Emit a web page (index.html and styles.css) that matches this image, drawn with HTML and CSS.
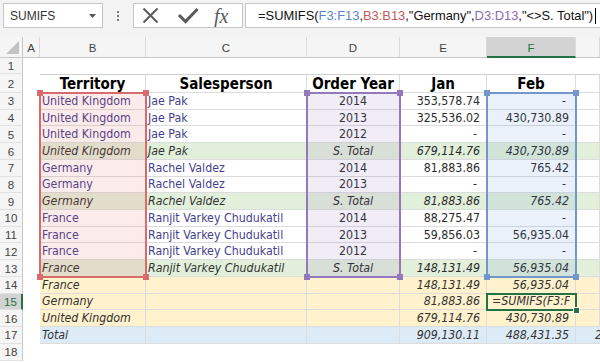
FILE: index.html
```html
<!DOCTYPE html>
<html>
<head>
<meta charset="utf-8">
<link rel="stylesheet" href="styles.css">
</head>
<body>
<div class="app">
  <div class="fbar">
    <div class="namebox"><span>SUMIFS</span><svg class="dd" width="7" height="4" viewBox="0 0 7 4"><path d="M0 0H7L3.5 4Z" fill="#555"/></svg></div>
    <div class="grip"><i></i><i></i><i></i></div>
    <div class="btns">
      <svg width="108" height="23" viewBox="0 0 108 23">
        <path d="M9.5 4.5L23.5 18.5M23.5 4.5L9.5 18.5" stroke="#5a5a5a" stroke-width="2" fill="none"/>
        <path d="M45 11L51.5 17.5L63.5 5" stroke="#5a5a5a" stroke-width="3" fill="none"/>
        <text x="80" y="19" class="fx">fx</text>
      </svg>
    </div>
    <div class="formula">=SUMIFS(<span class="f-f">F3:F13</span>,<span class="f-b">B3:B13</span>,"Germany",<span class="f-d">D3:D13</span>,"&lt;&gt;S. Total")<span class="caret"></span></div>
  </div>
  <div class="sheetwrap">
    <div class="sheet">
      <div class="row">
        <div class="corner"><svg width="13" height="13" viewBox="0 0 13 13"><path d="M0 13H13V0Z" fill="#c3c3c3"/></svg></div>
        <div class="ch">A</div><div class="ch">B</div><div class="ch">C</div><div class="ch">D</div><div class="ch">E</div><div class="ch sel">F</div><div class="ch"></div>
      </div>
      <div class="row">
        <div class="rh">1</div><div class="c"></div><div class="c"></div><div class="c"></div><div class="c"></div><div class="c"></div><div class="c"></div><div class="c"></div>
      </div>
      <div class="row h2">
        <div class="rh">2</div><div class="c"></div>
        <div class="c t">Territory</div><div class="c t">Salesperson</div><div class="c t">Order Year</div><div class="c t">Jan</div><div class="c t">Feb</div><div class="c t"></div>
      </div>
      <div class="row">
        <div class="rh">3</div><div class="c"></div>
        <div class="c t tx">United Kingdom</div><div class="c t tx">Jae Pak</div><div class="c t ctr">2014</div><div class="c t num">353,578.74</div><div class="c t num dash">-</div><div class="c t"></div>
      </div>
      <div class="row">
        <div class="rh">4</div><div class="c"></div>
        <div class="c t tx">United Kingdom</div><div class="c t tx">Jae Pak</div><div class="c t ctr">2013</div><div class="c t num">325,536.02</div><div class="c t num">430,730.89</div><div class="c t"></div>
      </div>
      <div class="row">
        <div class="rh">5</div><div class="c"></div>
        <div class="c t tx">United Kingdom</div><div class="c t tx">Jae Pak</div><div class="c t ctr">2012</div><div class="c t num dash">-</div><div class="c t num dash">-</div><div class="c t"></div>
      </div>
      <div class="row sub">
        <div class="rh">6</div><div class="c"></div>
        <div class="c t tx">United Kingdom</div><div class="c t tx">Jae Pak</div><div class="c t ctr">S. Total</div><div class="c t num">679,114.76</div><div class="c t num">430,730.89</div><div class="c t"></div>
      </div>
      <div class="row">
        <div class="rh">7</div><div class="c"></div>
        <div class="c t tx">Germany</div><div class="c t tx">Rachel Valdez</div><div class="c t ctr">2014</div><div class="c t num">81,883.86</div><div class="c t num">765.42</div><div class="c t"></div>
      </div>
      <div class="row">
        <div class="rh">8</div><div class="c"></div>
        <div class="c t tx">Germany</div><div class="c t tx">Rachel Valdez</div><div class="c t ctr">2013</div><div class="c t num dash">-</div><div class="c t num dash">-</div><div class="c t"></div>
      </div>
      <div class="row sub">
        <div class="rh">9</div><div class="c"></div>
        <div class="c t tx">Germany</div><div class="c t tx">Rachel Valdez</div><div class="c t ctr">S. Total</div><div class="c t num">81,883.86</div><div class="c t num">765.42</div><div class="c t"></div>
      </div>
      <div class="row">
        <div class="rh">10</div><div class="c"></div>
        <div class="c t tx">France</div><div class="c t tx">Ranjit Varkey Chudukatil</div><div class="c t ctr">2014</div><div class="c t num">88,275.47</div><div class="c t num dash">-</div><div class="c t"></div>
      </div>
      <div class="row">
        <div class="rh">11</div><div class="c"></div>
        <div class="c t tx">France</div><div class="c t tx">Ranjit Varkey Chudukatil</div><div class="c t ctr">2013</div><div class="c t num">59,856.03</div><div class="c t num">56,935.04</div><div class="c t"></div>
      </div>
      <div class="row">
        <div class="rh">12</div><div class="c"></div>
        <div class="c t tx">France</div><div class="c t tx">Ranjit Varkey Chudukatil</div><div class="c t ctr">2012</div><div class="c t num dash">-</div><div class="c t num dash">-</div><div class="c t"></div>
      </div>
      <div class="row sub">
        <div class="rh">13</div><div class="c"></div>
        <div class="c t tx">France</div><div class="c t tx">Ranjit Varkey Chudukatil</div><div class="c t ctr">S. Total</div><div class="c t num">148,131.49</div><div class="c t num">56,935.04</div><div class="c t"></div>
      </div>
      <div class="row sum">
        <div class="rh">14</div><div class="c"></div>
        <div class="c t">France</div><div class="c t"></div><div class="c t"></div><div class="c t num">148,131.49</div><div class="c t num">56,935.04</div><div class="c t"></div>
      </div>
      <div class="row sum">
        <div class="rh hl">15</div><div class="c"></div>
        <div class="c t">Germany</div><div class="c t"></div><div class="c t"></div><div class="c t num">81,883.86</div><div class="c t edit"><span class="clip">=SUMIFS(F3:F</span></div><div class="c t"></div>
      </div>
      <div class="row sum">
        <div class="rh">16</div><div class="c"></div>
        <div class="c t">United Kingdom</div><div class="c t"></div><div class="c t"></div><div class="c t num">679,114.76</div><div class="c t num">430,730.89</div><div class="c t"></div>
      </div>
      <div class="row tot">
        <div class="rh">17</div><div class="c"></div>
        <div class="c t">Total</div><div class="c t"></div><div class="c t"></div><div class="c t num">909,130.11</div><div class="c t num">488,431.35</div><div class="c t num">209,413.28</div>
      </div>
      <div class="row">
        <div class="rh">18</div><div class="c"></div><div class="c"></div><div class="c"></div><div class="c"></div><div class="c"></div><div class="c"></div><div class="c"></div>
      </div>
    </div>
    <div class="overlay">
      <div class="rng rng-b"><i class="tl"></i><i class="tr"></i><i class="bl"></i><i class="br"></i></div>
      <div class="rng rng-d"><i class="tl"></i><i class="tr"></i><i class="bl"></i><i class="br"></i></div>
      <div class="rng rng-f"><i class="tl"></i><i class="tr"></i><i class="bl"></i><i class="br"></i></div>
      <div class="act"><i></i></div>
    </div>
  </div>
</div>
</body>
</html>
```

FILE: styles.css
```css
* { box-sizing: border-box; margin: 0; padding: 0; }
body { margin: 0; width: 600px; height: 363px; overflow: hidden; background: #fff; font-family: "Liberation Sans", Arial, sans-serif; }
.app { display: flex; flex-direction: column; width: 600px; height: 363px; overflow: hidden; }

.fbar { display: flex; flex: none; height: 37px; background: #f3f3f3; padding: 3px 0 0 3px; }
.namebox { width: 100px; height: 25px; background: #fff; border: 1px solid #c6c6c6; display: flex; align-items: center; justify-content: space-between; padding: 0 6px 0 6px; font-size: 12px; color: #333; }
.dd { margin-top: 1px; }
.grip { width: 30px; height: 25px; display: flex; flex-direction: column; align-items: center; justify-content: center; gap: 2px; }
.grip i { display: block; width: 2px; height: 2px; background: #7a7a7a; }
.btns { width: 110px; height: 25px; background: #fff; border: 1px solid #c6c6c6; display: flex; }
.fx { font-family: "Liberation Serif", serif; font-style: italic; font-size: 20px; fill: #5a5a5a; }
.formula { flex: 1; margin-left: 2px; height: 25px; background: #fff; border: 1px solid #c6c6c6; border-right: 0; padding-left: 12px; display: flex; align-items: center; white-space: nowrap; font-size: 12.9px; color: #111; }
.f-f { color: #5a84c9; }
.f-b { color: #c65a5a; }
.f-d { color: #8a6cb0; }
.caret { display: inline-block; width: 1px; height: 16px; background: #000; margin-left: 2px; }

.sheetwrap { position: relative; flex: 1; overflow: hidden; background: #fff; }
.sheet, .overlay { display: grid; width: 600px; grid-template-columns: 23px 17px 106px 161px 93px 87px 89px 24px; grid-template-rows: 21px 16px 19px repeat(15, 16.73px) 17px; }
.overlay { position: absolute; top: 0; left: 0; pointer-events: none; }
.row { display: contents; }

.corner { background: #f5f5f5; border-right: 1px solid #c8c8c8; border-bottom: 1px solid #c8c8c8; display: flex; align-items: flex-end; justify-content: flex-end; padding: 0 3px 3px 0; }
.ch { background: #f5f5f5; border-right: 1px solid #dadada; border-bottom: 1px solid #c8c8c8; display: flex; align-items: center; justify-content: center; padding-top: 2px; font-size: 11.5px; color: #444; }
.ch.sel { background: #d3d3d3; color: #217346; border-bottom: 2px solid #217346; }
.rh { background: #f5f5f5; border-right: 1px solid #c8c8c8; border-bottom: 1px solid #e1e1e1; display: flex; align-items: center; justify-content: center; padding-top: 1px; font-size: 11.5px; color: #444; }
.rh.hl { background: #d3d3d3; color: #217346; border-right: 2px solid #217346; }

.c { display: flex; align-items: center; overflow: hidden; white-space: nowrap; padding: 0 2px; font-family: "DejaVu Sans Condensed", "DejaVu Sans", sans-serif; font-size: 12.3px; color: #2b2b2b; }
.t { background: #fff; border-right: 1px solid #dcdcdc; border-bottom: 1px solid #dcdcdc; }
.h2 .t { border-top: 1px solid #d0d0d0; justify-content: center; font-weight: bold; font-size: 15px; color: #000; }
.tx { color: #453f8f; }
.ctr { justify-content: center; }
.num { justify-content: flex-end; padding-right: 6px; }
.dash { padding-right: 9px; }
.sub .t { background: #e2efda; font-style: italic; }
.sub .tx { color: #333; }
.sum .t { background: #fff2cc; font-style: italic; color: #333; }
.tot .t { background: #ddebf7; font-style: italic; color: #333; }
.tot .t:last-child { justify-content: flex-start; padding-left: 19px; border-right: 0; }
.edit { padding-left: 5px; }
.clip { overflow: hidden; }

.rng { position: relative; margin: -1px; border: 2px solid currentColor; }
.rng i { position: absolute; width: 6px; height: 6px; background: currentColor; }
.rng .tl { top: -4px; left: -4px; }
.rng .tr { top: -4px; right: -4px; }
.rng .bl { bottom: -4px; left: -4px; }
.rng .br { bottom: -4px; right: -4px; }
.rng-b { grid-column: 3; grid-row: 4 / 15; color: #d86c6c; background: rgba(232, 90, 90, 0.12); }
.rng-d { grid-column: 5; grid-row: 4 / 15; color: #9478bc; background: rgba(140, 110, 190, 0.12); }
.rng-f { grid-column: 7; grid-row: 4 / 15; color: #7397cc; background: rgba(90, 140, 215, 0.12); }
.act { position: relative; grid-column: 7; grid-row: 16; margin: -1px; border: 2px solid #217346; }
.act i { position: absolute; right: -5px; bottom: -5px; width: 7px; height: 7px; background: #217346; border: 1px solid #fff; }
```
